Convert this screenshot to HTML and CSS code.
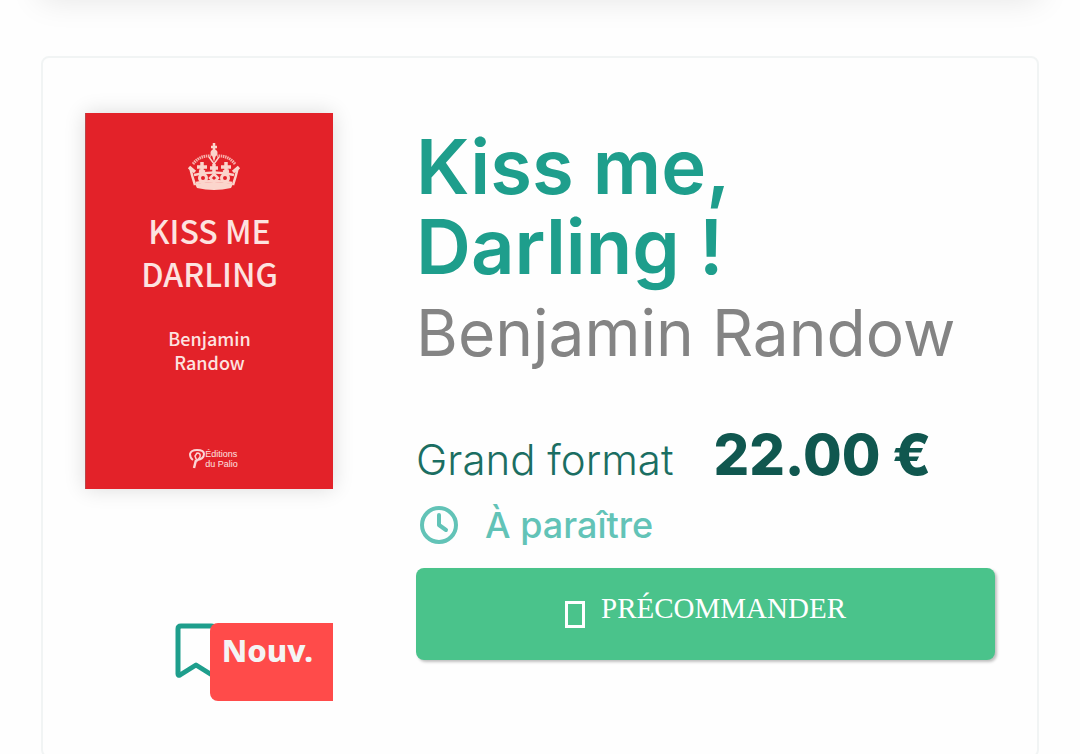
FILE: index.html
```html
<!DOCTYPE html>
<html lang="fr">
<head>
    <meta charset="UTF-8">
    <meta name="viewport" content="width=device-width, initial-scale=1">
    <title>Kiss me, Darling !</title>
    <link rel="stylesheet" href="styles.css">
</head>
<body>
    <header class="topbar"></header>
    <main class="product">
        <div class="product__side">
            <div class="cover">
                <svg class="cover__crown" viewBox="0 0 52 48" aria-hidden="true">
                    <g fill="none" stroke="#fbd5cc">
                        <path d="M5 21Q12 12 23 13M47 21Q40 12 29 13" stroke-width="3" stroke-dasharray="1.5 .7" opacity=".8"/>
                        <path d="M21 14l5 7 5-7" stroke-width="1.5"/>
                        <path d="M2 24q2 9 5 18M50 24q-2 9-5 18" stroke-width="2.5"/>
                        <path d="M6 32q20-5 40 0M8 40q18-4 36 0" stroke-width="2.5"/>
                        <path d="M14 19v12M9 24h10M38 19v12M33 24h10M26 21v9M22 25h8" stroke-width="3.5"/>
                        <path d="M1 24l6 5M51 24l-6 5M11 28l6 1M35 29l6-1" stroke-width="3.5"/>
                        <circle cx="15" cy="35" r="3.5" stroke-width="3"/>
                        <circle cx="37" cy="35" r="3.5" stroke-width="3"/>
                        <path d="M26 31l4 4-4 4-4-4z" stroke-width="2.5"/>
                        <path d="M26 0v8M23 4h6" stroke-width="2.5"/>
                    </g>
                    <g fill="#fbd5cc">
                        <circle cx="26" cy="10" r="3.5"/>
                        <path d="M24 12h4l-2 7z"/>
                        <path d="M7 41q19-4 38 0l-2 4q-17 4-34 0z"/>
                    </g>
                </svg>
                <div class="cover__title">KISS ME<br>DARLING</div>
                <div class="cover__author">Benjamin<br>Randow</div>
                <div class="cover__publisher">
                    <svg class="cover__logo" viewBox="0 0 16 21" aria-hidden="true">
                        <path d="M4 12Q1 10 1 6q1-4 7-4 7 0 7 4 0 5-7 6" fill="none" stroke="#fbd5d5" stroke-width="2"/>
                        <path d="M8 5q4 0 3 4l-3 4-2-5z" fill="none" stroke="#fbd5d5" stroke-width="1.5"/>
                        <path d="M7 12L5 20" stroke="#fbd5d5" stroke-width="2.5"/>
                    </svg>
                    <span>Éditions<br>du Palio</span>
                </div>
            </div>
            <div class="tags">
                <button class="bookmark" type="button" aria-label="Ajouter aux favoris">
                    <svg class="bookmark__icon" viewBox="0 0 42 56" aria-hidden="true">
                        <path d="M3 51V6q0-3 3-3h30q3 0 3 3v45q0 2-2 1L21 42 5 52q-2 1-2-1z" fill="none" stroke="#1e9e8c" stroke-width="5" stroke-linejoin="round"/>
                    </svg>
                </button>
                <span class="badge">Nouv.</span>
            </div>
        </div>
        <div class="product__info">
            <h1 class="title">Kiss me,<br>Darling !</h1>
            <h2 class="author">Benjamin Randow</h2>
            <div class="offer">
                <span class="offer__format">Grand format</span>
                <span class="offer__price">22.00 €</span>
            </div>
            <div class="stock">
                <svg class="stock__icon" viewBox="0 0 38 38" aria-hidden="true">
                    <circle cx="19" cy="19" r="17" fill="none" stroke="#62c3b7" stroke-width="4"/>
                    <path d="M19 9v10l7 5" fill="none" stroke="#62c3b7" stroke-width="4" stroke-linecap="round" stroke-linejoin="round"/>
                </svg>
                <span>À paraître</span>
            </div>
            <button class="order" type="button">
                <span class="order__icon"></span>
                <span>PRÉCOMMANDER</span>
            </button>
        </div>
    </main>
</body>
</html>
```
FILE: styles.css
```css
* {
    box-sizing: border-box;
}
body {
    margin: 0;
    background: #fefefe;
    font-family: Inter, sans-serif;
}
.topbar {
    height: 40px;
    margin: -40px 40px 0;
    box-shadow: 0 0 32px rgba(0, 0, 0, 0.1);
}
.product {
    display: grid;
    grid-template-columns: 3fr 7fr;
    gap: 83px;
    margin: 56px 41px 0;
    padding: 55px 42px;
    border: 2px solid #f1f4f4;
    border-radius: 8px;
}
.cover {
    display: flex;
    flex-direction: column;
    align-items: center;
    min-height: 376px;
    padding: 30px 0 20px;
    background: #e32229;
    border-left: 1px solid #b8474a;
    box-shadow: 0 0 20px rgba(0, 0, 0, 0.14);
    color: #fde3e0;
    font-family: "Noto Sans CJK SC", "Noto Sans", sans-serif;
    text-align: center;
}
.cover__crown {
    width: 52px;
    height: 48px;
    margin-left: 8px;
}
.cover__title {
    margin-top: 18px;
    font-size: 32px;
    font-weight: 500;
    line-height: 43px;
}
.cover__author {
    margin-top: 31px;
    font-size: 18px;
    font-weight: 500;
    line-height: 24px;
}
.cover__publisher {
    display: flex;
    align-items: center;
    margin: auto 0 0 8px;
    font-family: "Liberation Sans", sans-serif;
    font-size: 9px;
    line-height: 10px;
    text-align: left;
}
.cover__logo {
    width: 16px;
    height: 21px;
}
.tags {
    display: flex;
    justify-content: flex-end;
    align-items: flex-start;
    margin-top: 134px;
}
.bookmark {
    margin-right: -7px;
    padding: 0;
    border: none;
    background: none;
    cursor: pointer;
}
.bookmark__icon {
    display: block;
    width: 42px;
    height: 56px;
}
.badge {
    position: relative;
    height: 78px;
    padding: 8px 20px 0 12px;
    background: #ff4b4a;
    border-radius: 8px 0 0 8px;
    color: #f4f4f4;
    font-family: "Noto Sans", sans-serif;
    font-size: 31px;
    font-weight: 800;
    line-height: 38px;
}
.product__info {
    padding-top: 13px;
}
.title,
.author {
    margin: 0;
    line-height: 80px;
}
.title {
    color: #1e9e8c;
    font-size: 76px;
    font-weight: 600;
}
.author {
    margin-top: 7px;
    color: #848484;
    font-size: 64px;
    font-weight: 400;
    white-space: nowrap;
}
.offer {
    display: flex;
    align-items: baseline;
    gap: 40px;
    margin-top: 50px;
    line-height: 64px;
    white-space: nowrap;
}
.offer__format {
    color: #1b6e62;
    font-size: 42px;
    font-weight: 300;
}
.offer__price {
    color: #10574f;
    font-size: 56px;
    font-weight: 800;
}
.stock {
    display: flex;
    align-items: center;
    gap: 27px;
    margin-top: 9px;
    padding-left: 4px;
    color: #62c3b7;
    font-size: 36px;
    font-weight: 500;
    line-height: 48px;
}
.stock__icon {
    width: 38px;
    height: 38px;
}
.order {
    display: flex;
    justify-content: center;
    align-items: center;
    gap: 16px;
    width: 100%;
    height: 92px;
    margin-top: 19px;
    padding: 0 0 12px;
    border: none;
    border-radius: 8px;
    background: #4ac38b;
    box-shadow: 2px 2px 3px rgba(0, 0, 0, 0.25);
    color: #fff;
    font-family: "Liberation Serif", serif;
    font-size: 29px;
    cursor: pointer;
}
.order__icon {
    width: 20px;
    height: 27px;
    margin-top: 12px;
    border: 3px solid #fff;
}
```
